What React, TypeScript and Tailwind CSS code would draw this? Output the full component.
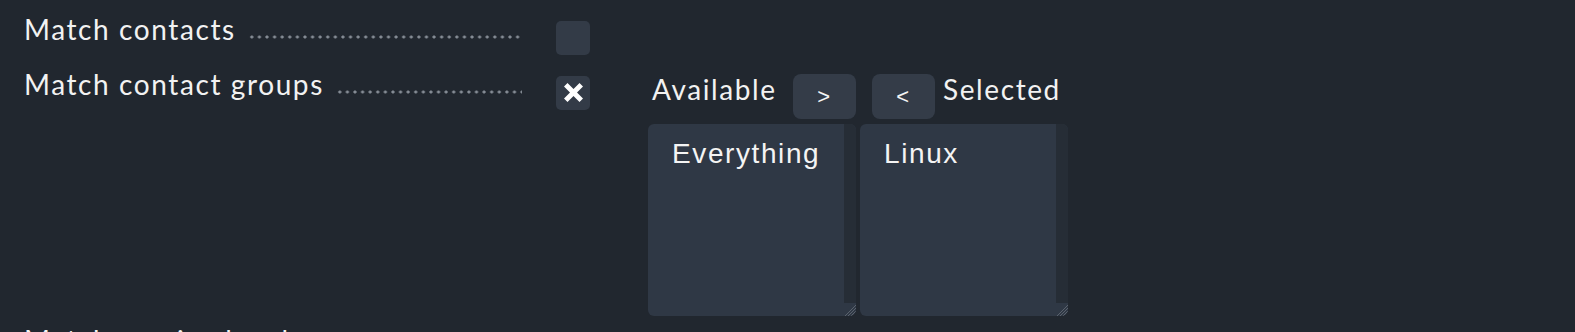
import React from "react";

const Dots = () => (
  <div className="ml-[12px] mt-[23px] h-[4px] flex-1 bg-[radial-gradient(circle,#858c95_1.3px,transparent_1.8px)] bg-[length:7.6px_4px] bg-repeat-x" />
);

const Checkbox = ({ checked }: { checked?: boolean }) => (
  <div className="mt-[9px] flex h-[34px] w-[34px] shrink-0 items-center justify-center rounded-[5px] bg-[#333b47]">
    {checked && (
      <svg width="19" height="19" viewBox="0 0 19 19" className="-mt-[1px]">
        <path
          d="M3.5 0 L9.5 6 L15.5 0 L19 3.5 L13 9.5 L19 15.5 L15.5 19 L9.5 13 L3.5 19 L0 15.5 L6 9.5 L0 3.5 Z"
          fill="#ffffff"
        />
      </svg>
    )}
  </div>
);

const Grip = () => (
  <svg width="12" height="13" viewBox="0 0 12 13">
    <line x1="12" y1="2" x2="1" y2="13" stroke="#5a626d" strokeWidth="1" />
    <line x1="12" y1="5" x2="4" y2="13" stroke="#5a626d" strokeWidth="1" />
    <line x1="12" y1="8" x2="7" y2="13" stroke="#5a626d" strokeWidth="1" />
    <line x1="12" y1="11" x2="10" y2="13" stroke="#5a626d" strokeWidth="1" />
  </svg>
);

const SelectBox = ({ item }: { item: string }) => (
  <div className="flex h-[192px] w-[208px] overflow-hidden rounded-[6px] bg-[#2f3845]">
    <div className="flex-1 pl-[24px] pt-[14px] font-['Liberation_Sans',Arial,sans-serif] text-[28px] leading-[32px] tracking-[1.6px] text-[#f4f4f4]">
      {item}
    </div>
    <div className="flex w-[12px] flex-col">
      <div className="flex-1 bg-[#262d36]" />
      <Grip />
    </div>
  </div>
);

const Btn = ({ label }: { label: string }) => (
  <div className="flex h-[45px] w-[63px] items-center justify-center rounded-[8px] bg-[#343c48] font-['Liberation_Sans',Arial,sans-serif] text-[22px] text-[#f4f4f4]">
    {label}
  </div>
);

export default function App() {
  return (
    <div className="h-[332px] w-full overflow-hidden bg-[#21272f] pt-[12px] font-['Lato','Noto_Sans',sans-serif] text-[28px] tracking-[1.6px] text-[#f2f2f2]">
      <div className="flex items-start">
        <div className="flex w-[522px] shrink-0 pl-[24px]">
          <span className="whitespace-nowrap leading-[34px]">Match contacts</span>
          <Dots />
        </div>
        <div className="ml-[34px]">
          <Checkbox />
        </div>
      </div>

      <div className="mt-[12px] flex h-[256px] items-start">
        <div className="flex w-[522px] shrink-0 pl-[24px]">
          <span className="whitespace-nowrap leading-[34px]">Match contact groups</span>
          <Dots />
        </div>
        <div className="ml-[34px]">
          <Checkbox checked />
        </div>
        <div className="ml-[58px] mt-[7px] flex flex-col">
          <div className="grid grid-cols-[208px_208px] gap-x-[4px]">
            <div className="flex items-start justify-between pl-[4px]">
              <span className="leading-[30px]">Available</span>
              <Btn label=">" />
            </div>
            <div className="flex items-start gap-[8px] pl-[12px]">
              <Btn label="<" />
              <span className="leading-[30px]">Selected</span>
            </div>
          </div>
          <div className="mt-[5px] grid grid-cols-[208px_208px] gap-x-[4px]">
            <SelectBox item="Everything" />
            <SelectBox item="Linux" />
          </div>
        </div>
      </div>

      <div className="flex">
        <div className="flex w-[522px] shrink-0 pl-[24px]">
          <span className="whitespace-nowrap leading-[34px]">Match service levels</span>
          <Dots />
        </div>
      </div>
    </div>
  );
}
